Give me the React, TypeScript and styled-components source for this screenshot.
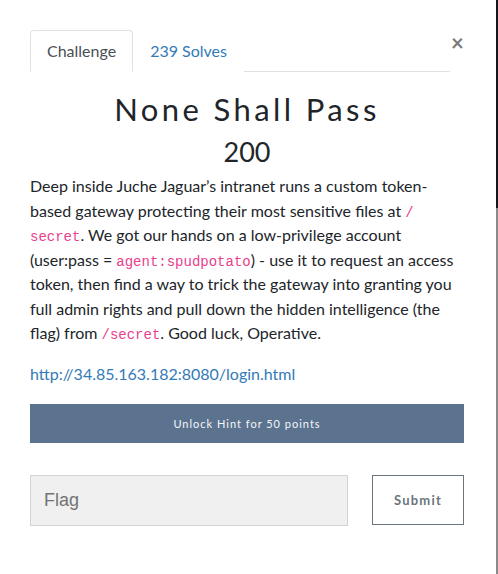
import React from "react";
import styled, { createGlobalStyle } from "styled-components";

const GlobalStyle = createGlobalStyle`
  html, body {
    margin: 0;
    padding: 0;
    background: #ffffff;
  }
  body {
    font-family: Lato, "Noto Sans", sans-serif;
    color: #212529;
  }
`;

const Page = styled.div`
  position: relative;
  width: 498px;
  height: 574px;
  overflow: hidden;
  background: #fff;
`;

const EdgeBar = styled.div`
  position: absolute;
  top: 0;
  right: 0;
  width: 2px;
  height: 574px;
  background: linear-gradient(to bottom, #15151c 0, #15151c 208px, #8a8a8a 208px);
`;

const Modal = styled.div`
  width: 434px;
  padding: 30px 0 0 30px;
`;

const Header = styled.div`
  display: flex;
  align-items: flex-start;
`;

const TabList = styled.ul`
  display: flex;
  flex-shrink: 0;
  width: 420px;
  margin: 0;
  padding: 0;
  list-style: none;
  border-bottom: 1px solid #dee2e6;
`;

const Tab = styled.li<{ $active?: boolean }>`
  margin-bottom: -1px;
  padding: 8px 16px;
  font-size: 16px;
  line-height: 24px;
  border: 1px solid ${(p) => (p.$active ? "#dee2e6" : "transparent")};
  border-bottom-color: ${(p) => (p.$active ? "#fff" : "transparent")};
  border-radius: 4px 4px 0 0;
  color: ${(p) => (p.$active ? "#495057" : "#337ab7")};
  background: #fff;
`;

const Close = styled.button`
  margin: 1px 0 0 0;
  padding: 0 0 0 1px;
  border: 0;
  background: none;
  font-family: Lato, sans-serif;
  font-size: 22px;
  font-weight: 700;
  line-height: 24px;
  color: #7a7a7a;
  cursor: pointer;
`;

const Title = styled.h3`
  margin: 17px 0 0 0;
  text-align: center;
  font-family: Lato, sans-serif;
  font-weight: 400;
  font-size: 31px;
  line-height: 40px;
  letter-spacing: 3.4px;
  color: #212529;
`;

const Points = styled.h4`
  margin: 6px 0 0 0;
  text-align: center;
  font-weight: 400;
  font-size: 27px;
  line-height: 34px;
  color: #212529;
`;

const Description = styled.p`
  margin: 5px 0 16px 0;
  font-size: 16px;
  line-height: 24.5px;
  color: #212529;
`;

const Code = styled.code`
  font-family: "Liberation Mono", "DejaVu Sans Mono", monospace;
  font-size: 14px;
  line-height: 1;
  color: #e83e8c;
`;

const Link = styled.a`
  display: block;
  font-size: 16px;
  line-height: 24px;
  color: #337ab7;
  text-decoration: none;
`;

const HintButton = styled.button`
  display: block;
  width: 434px;
  height: 39px;
  margin: 18px 0 0 0;
  border: 0;
  background: #5c7390;
  color: #f4f6f8;
  font-family: Lato, sans-serif;
  font-size: 11px;
  letter-spacing: 1px;
  cursor: pointer;
`;

const SubmitRow = styled.form`
  display: flex;
  gap: 24px;
  margin-top: 32px;
  align-items: flex-start;
`;

const FlagInput = styled.input`
  box-sizing: border-box;
  width: 318px;
  height: 51px;
  padding: 0 13px;
  border: 1px solid #ced4da;
  background: #f0f0f0;
  font-family: "Liberation Sans", Arial, sans-serif;
  font-size: 18px;
  color: #495057;
  &::placeholder {
    color: #737373;
  }
`;

const SubmitButton = styled.button`
  box-sizing: border-box;
  width: 92px;
  height: 50px;
  border: 1px solid #6c757d;
  background: #fff;
  color: #6c757d;
  font-family: Lato, sans-serif;
  font-weight: 700;
  font-size: 13px;
  letter-spacing: 1.2px;
  cursor: pointer;
`;

export default function App() {
  return (
    <Page>
      <GlobalStyle />
      <Modal>
        <Header>
          <TabList>
            <Tab $active>Challenge</Tab>
            <Tab>239 Solves</Tab>
          </TabList>
          <Close aria-label="Close">×</Close>
        </Header>
        <Title>None Shall Pass</Title>
        <Points>200</Points>
        <Description>
          Deep inside Juche Jaguar’s intranet runs a custom token-based gateway protecting their most
          sensitive files at <Code>/<wbr />secret</Code>. We got our hands on a low-privilege account
          (user:pass = <Code>agent:spudpotato</Code>) - use it to request an access token, then find a
          way to trick the gateway into granting you full admin rights and pull down the hidden
          intelligence (the flag) from <Code>/secret</Code>. Good luck, Operative.
        </Description>
        <Link href="#">http://34.85.163.182:8080/login.html</Link>
        <HintButton type="button">Unlock Hint for 50 points</HintButton>
        <SubmitRow onSubmit={(e) => e.preventDefault()}>
          <FlagInput placeholder="Flag" />
          <SubmitButton type="submit">Submit</SubmitButton>
        </SubmitRow>
      </Modal>
      <EdgeBar />
    </Page>
  );
}
